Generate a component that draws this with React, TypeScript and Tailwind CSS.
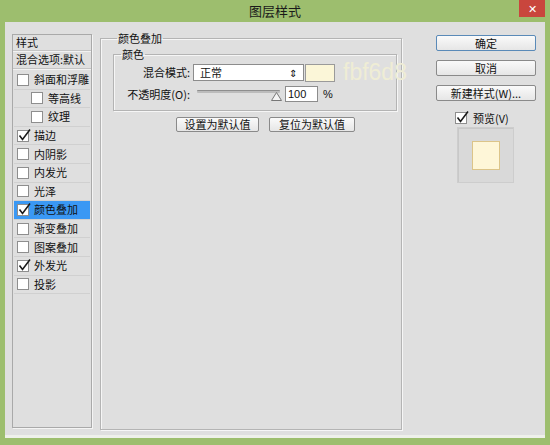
import React from "react";

function Check({ checked }: { checked?: boolean }) {
  return (
    <span className="relative block w-[12px] h-[12px] bg-white border border-[#8e8e8e] shrink-0">
      {checked && (
        <svg className="absolute left-[0px] top-[-3px]" width="14" height="14" viewBox="0 0 14 14">
          <path d="M1.5 7.5 L4.5 11.5 L12 1.5" fill="none" stroke="#1b1b1b" strokeWidth="1.6" />
        </svg>
      )}
    </span>
  );
}

const rows: { label: string; checked?: boolean; indent?: boolean; active?: boolean }[] = [
  { label: "斜面和浮雕" },
  { label: "等高线", indent: true },
  { label: "纹理", indent: true },
  { label: "描边", checked: true },
  { label: "内阴影" },
  { label: "内发光" },
  { label: "光泽" },
  { label: "颜色叠加", checked: true, active: true },
  { label: "渐变叠加" },
  { label: "图案叠加" },
  { label: "外发光", checked: true },
  { label: "投影" },
];

function Btn({ children, primary, className }: { children: React.ReactNode; primary?: boolean; className?: string }) {
  return (
    <div
      className={
        "flex items-center justify-center rounded-[2px] border bg-gradient-to-b from-[#fafafa] to-[#e6e6e6] text-[11px] leading-none text-[#111] whitespace-nowrap " +
        (primary ? "border-[#5a8ab8] " : "border-[#8a8a8a] ") +
        (className ?? "")
      }
    >
      {children}
    </div>
  );
}

export default function App() {
  return (
    <div className="w-[550px] h-[445px] bg-[#9dbe6e] flex flex-col font-['Noto_Sans_CJK_SC','Liberation_Sans',sans-serif] text-[#111] overflow-hidden">
      {/* title bar */}
      <div className="relative h-[22px] shrink-0 flex items-center justify-center">
        <span className="text-[13px] leading-none text-[#1a1a1a] mt-[-2px]">图层样式</span>
        <div className="absolute right-[5px] top-0 w-[26px] h-[17px] bg-[#c9463d] flex items-center justify-center text-white text-[11px] leading-none">
          ✕
        </div>
      </div>

      {/* content */}
      <div className="mx-[5px] h-[416px] bg-[#dfdfdf] border-b-[3px] border-[#eef0ea] flex items-start pl-[7px]">
        {/* left panel */}
        <div className="mt-[12px] w-[80px] h-[394px] border border-[#a9a9a9] shadow-[1px_1px_0_#f4f4f4] flex flex-col text-[11px] leading-none">
          <div className="h-[16px] flex items-center pl-[3px] border-b border-[#c4c4c4] shadow-[0_1px_0_#f2f2f2]">样式</div>
          <div className="h-[18px] flex items-center pl-[3px] border-b border-[#c4c4c4] shadow-[0_1px_0_#f2f2f2] whitespace-nowrap">混合选项:默认</div>
          <div className="pt-[2px] flex flex-col">
            {rows.map((r) => (
              <div
                key={r.label}
                className={
                  "h-[18.6px] flex items-center gap-[5px] border-b border-[#d0d0d0] mx-[1px] " +
                  (r.indent ? "pl-[17px] " : "pl-[3px] ") +
                  (r.active ? "bg-[#3a98f4]" : "")
                }
              >
                <Check checked={r.checked} />
                <span className="whitespace-nowrap">{r.label}</span>
              </div>
            ))}
          </div>
        </div>

        {/* middle group */}
        <fieldset className="ml-[8px] mt-[10px] w-[302px] min-w-0 shrink-0 h-[398px] border border-[#b4b4b4] shadow-[inset_1px_1px_0_#f6f6f6,1px_1px_0_#f6f6f6] pl-[12px] pr-[4px]">
          <legend className="ml-[4px] px-[1px] text-[11px] leading-[12px]">颜色叠加</legend>
          <fieldset className="mt-[4px] w-[284px] min-w-0 h-[63px] border border-[#b4b4b4] shadow-[inset_1px_1px_0_#f6f6f6,1px_1px_0_#f6f6f6] flex flex-col">
            <legend className="ml-[7px] px-[1px] text-[11px] leading-[12px]">颜色</legend>
            <div className="mt-[4px] flex items-center h-[17px]">
              <span className="w-[76px] shrink-0 text-right text-[11px] leading-none">混合模式:</span>
              <div className="ml-[3px] shrink-0 w-[111px] h-[17px] bg-white border border-[#8c8c8c] flex items-center justify-between px-[6px] text-[11px] leading-none">
                <span>正常</span>
                <span className="text-[10px] leading-none">⇕</span>
              </div>
              <div className="ml-[1px] shrink-0 w-[30px] h-[18px] bg-[#fbf6d8] border border-[#9a9a9a]" />
              <span className="ml-[8px] shrink-0 whitespace-nowrap font-['Liberation_Sans',sans-serif] text-[23px] leading-none text-[#efedd5]">fbf6d8</span>
            </div>
            <div className="mt-[5px] flex items-center h-[16px]">
              <span className="w-[76px] shrink-0 text-right text-[11px] leading-none whitespace-nowrap">不透明度(O):</span>
              <div className="relative ml-[7px] shrink-0 w-[83px] h-[16px]">
                <div className="absolute left-0 right-0 top-[4px] h-[3px] bg-[#bcbcbc] border-t border-[#8e8e8e] rounded-[1px]" />
                <svg className="absolute left-[74px] top-[6px]" width="11" height="9" viewBox="0 0 11 9">
                  <path d="M5.5 0.5 L10.5 8.5 L0.5 8.5 Z" fill="#f4f4f4" stroke="#777" strokeWidth="1" />
                </svg>
              </div>
              <div className="ml-[5px] shrink-0 w-[33px] h-[16px] bg-white border border-[#8c8c8c] flex items-center pl-[2px] text-[11px] leading-none font-['Liberation_Sans',sans-serif]">100</div>
              <span className="ml-[5px] text-[11px] leading-none font-['Liberation_Sans',sans-serif]">%</span>
            </div>
          </fieldset>
          <div className="mt-[6px] ml-[63px] flex gap-[10px]">
            <Btn className="w-[83px] h-[15px]">设置为默认值</Btn>
            <Btn className="w-[86px] h-[15px]">复位为默认值</Btn>
          </div>
        </fieldset>

        {/* right column */}
        <div className="ml-[34px] mt-[13px] w-[100px] shrink-0 flex flex-col">
          <Btn primary className="h-[16px]">确定</Btn>
          <Btn className="h-[16px] mt-[9px]">取消</Btn>
          <Btn className="h-[16px] mt-[9px]">新建样式(W)...</Btn>
          <div className="mt-[11px] ml-[19px] flex items-center gap-[6px] text-[11px] leading-none">
            <Check checked />
            <span>预览(V)</span>
          </div>
          <div className="mt-[3px] ml-[21px] w-[57px] h-[56px] bg-[#d9d9d9] border border-[#cdcdcd] shadow-[inset_1px_1px_0_#c8c8c8] flex items-center justify-center">
            <div className="w-[28px] h-[29px] bg-[#fef6d8] border border-[#dcc489]" />
          </div>
        </div>
      </div>
    </div>
  );
}
